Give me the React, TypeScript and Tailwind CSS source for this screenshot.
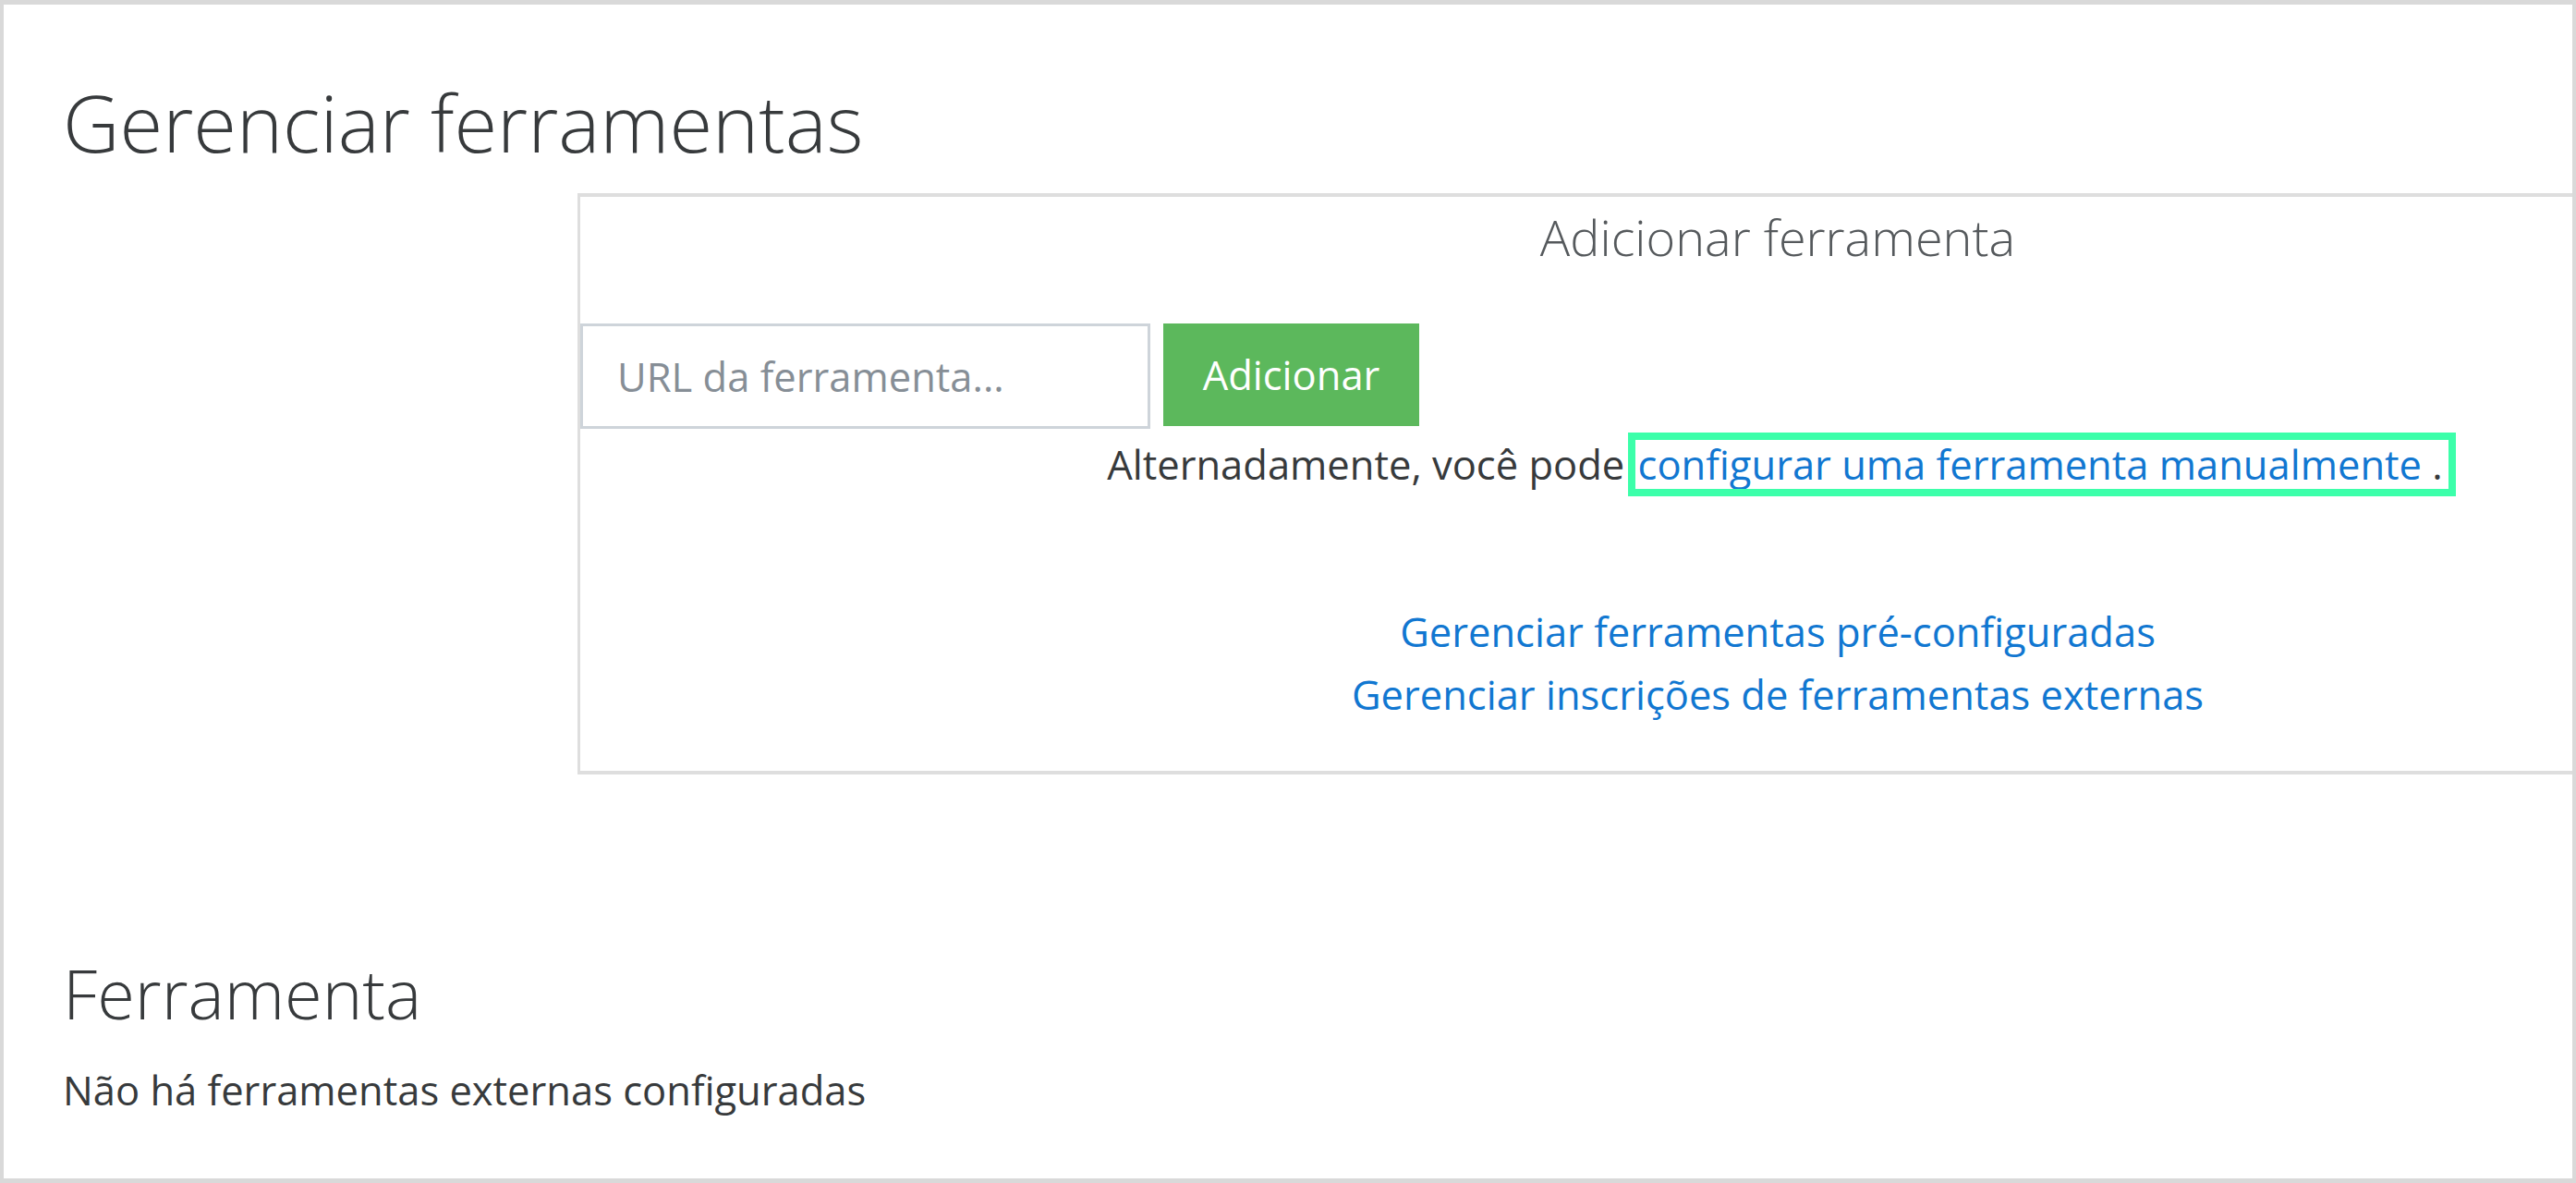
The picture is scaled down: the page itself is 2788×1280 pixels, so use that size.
import { useState } from 'react';

const COR_LINK = '#1177d1';

export default function App() {
    const [url, setUrl] = useState('');

    return (
        <div className="w-[2788px] h-[1280px] overflow-hidden bg-white border-[#d9d9d9] border-t-[5px] border-b-[5px] border-l-[4px] border-r-[4px] pl-[64px] font-['Open_Sans',sans-serif] text-[#373a3c]">

            <h1 className="mt-[76px] text-[85px] leading-[102px] font-light text-[#373a3c]">
                Gerenciar ferramentas
            </h1>

            {/* bloco de adicionar ferramenta, mais largo que a tela */}
            <div className="mt-[26px] ml-[557px] w-[2598px] shrink-0 border-[#dedede] border-t-[4px] border-b-[4px] border-l-[3px] border-r-[3px] pt-[11px] pb-[48px]">
                <h3 className="text-center text-[54px] leading-[65px] font-light text-[#55595c]">
                    Adicionar ferramenta
                </h3>

                <div className="mt-[61px] flex items-start gap-[14px]">
                    <input
                        type="text"
                        value={url}
                        onChange={(e) => setUrl(e.target.value)}
                        placeholder="URL da ferramenta..."
                        className="w-[617px] h-[114px] border-[3px] border-[#ced4da] bg-white pl-[37px] text-[43.5px] text-[#495057] placeholder:text-[#868e96] outline-none"
                    />
                    <button
                        type="button"
                        className="w-[277px] h-[111px] bg-[#5cb85c] text-white text-[43.5px]"
                    >
                        Adicionar
                    </button>
                </div>

                <p className="mt-[6px] text-center text-[43.5px] leading-[66px]">
                    Alternadamente, você pode{' '}
                    <span className="inline-block h-[53px] leading-[53px] pl-[3px] pr-[6px] outline-[8px] outline-solid outline-[#3cffaa]">
                        <a href="#" style={{ color: COR_LINK }}>configurar uma ferramenta manualmente</a> .
                    </span>
                </p>

                <div className="mt-[114px] flex flex-col items-center text-[43.5px] leading-[68px] text-[#1177d1]">
                    <a href="#">Gerenciar ferramentas pré-configuradas</a>
                    <a href="#">Gerenciar inscrições de ferramentas externas</a>
                </div>
            </div>

            <h2 className="mt-[192px] text-[74px] leading-[89px] font-light text-[#373a3c]">
                Ferramenta
            </h2>
            <p className="mt-[28px] text-[43.5px] leading-[66px]">
                Não há ferramentas externas configuradas
            </p>
        </div>
    );
}
